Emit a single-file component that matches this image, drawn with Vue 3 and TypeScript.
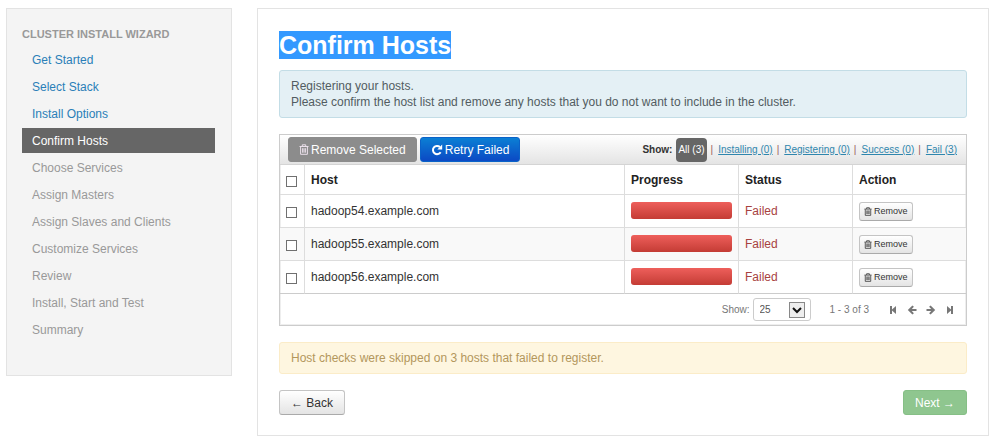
<script setup lang="ts">
import { computed, ref } from 'vue'

interface Step {
  label: string
  state: 'done' | 'active' | 'pending'
}

interface Host {
  name: string
  status: string
  progress: number
  selected: boolean
}

const steps: Step[] = [
  { label: 'Get Started', state: 'done' },
  { label: 'Select Stack', state: 'done' },
  { label: 'Install Options', state: 'done' },
  { label: 'Confirm Hosts', state: 'active' },
  { label: 'Choose Services', state: 'pending' },
  { label: 'Assign Masters', state: 'pending' },
  { label: 'Assign Slaves and Clients', state: 'pending' },
  { label: 'Customize Services', state: 'pending' },
  { label: 'Review', state: 'pending' },
  { label: 'Install, Start and Test', state: 'pending' },
  { label: 'Summary', state: 'pending' },
]

const hosts = ref<Host[]>(
  ['hadoop54', 'hadoop55', 'hadoop56'].map((n) => ({
    name: `${n}.example.com`,
    status: 'Failed',
    progress: 100,
    selected: false,
  })),
)

const filters = computed(() => [
  { label: 'All', count: hosts.value.length },
  { label: 'Installing', count: 0 },
  { label: 'Registering', count: 0 },
  { label: 'Success', count: 0 },
  { label: 'Fail', count: hosts.value.length },
])
const activeFilter = ref('All')
const pageSize = ref(25)

const allSelected = computed({
  get: () => hosts.value.length > 0 && hosts.value.every((h) => h.selected),
  set: (v: boolean) => hosts.value.forEach((h) => (h.selected = v)),
})

function removeHost(name: string) {
  hosts.value = hosts.value.filter((h) => h.name !== name)
}
</script>

<template>
  <div class="page">
    <nav class="sidebar" aria-labelledby="wizard-title">
      <h2 id="wizard-title">CLUSTER INSTALL WIZARD</h2>
      <ul>
        <li v-for="step in steps" :key="step.label">
          <a v-if="step.state !== 'pending'" href="#" :class="['step', step.state]">{{ step.label }}</a>
          <span v-else class="step pending">{{ step.label }}</span>
        </li>
      </ul>
    </nav>

    <main class="card">
      <h1><span class="marked">Confirm Hosts</span></h1>
      <div class="alert info">
        <p>Registering your hosts.</p>
        <p>Please confirm the host list and remove any hosts that you do not want to include in the cluster.</p>
      </div>

      <section class="hosts">
        <div class="toolbar">
          <button type="button" class="btn muted">
            <svg class="trash" viewBox="0 0 10 11"><path d="M0.5 2.5h9M3.3 2.3V0.8h3.4v1.5M1.6 2.8v7.5h6.8V2.8M3.6 4.2v4.5M5 4.2v4.5M6.4 4.2v4.5" /></svg>
            Remove Selected
          </button>
          <button type="button" class="btn primary">
            <svg class="retry" viewBox="0 0 12 12"><path d="M9.6 8.2A4.1 4.1 0 1 1 8.9 3.1" fill="none" stroke="currentColor" stroke-width="2" /><path d="M11.2 0.6v4.9H6.3z" fill="currentColor" /></svg>
            Retry Failed
          </button>
          <div class="filters">
            <b>Show:</b>
            <template v-for="(f, i) in filters" :key="f.label">
              <span v-if="i" class="bar">|</span>
              <a href="#" :class="{ current: f.label === activeFilter }" @click.prevent="activeFilter = f.label">{{ f.label }} ({{ f.count }})</a>
            </template>
          </div>
        </div>

        <table>
          <colgroup>
            <col class="c-check" />
            <col />
            <col class="c-side" />
            <col class="c-side" />
            <col class="c-side" />
          </colgroup>
          <thead>
            <tr>
              <th><input v-model="allSelected" type="checkbox" aria-label="Select all hosts" /></th>
              <th>Host</th>
              <th>Progress</th>
              <th>Status</th>
              <th>Action</th>
            </tr>
          </thead>
          <tbody>
            <tr v-for="host in hosts" :key="host.name">
              <td><input v-model="host.selected" type="checkbox" :aria-label="host.name" /></td>
              <td>{{ host.name }}</td>
              <td>
                <div class="progress"><div class="fill" :style="{ width: host.progress + '%' }"></div></div>
              </td>
              <td class="failed">{{ host.status }}</td>
              <td>
                <button type="button" class="btn mini" @click="removeHost(host.name)">
                  <svg class="trash" viewBox="0 0 10 11"><path d="M0.5 2.5h9M3.3 2.3V0.8h3.4v1.5M1.6 2.8v7.5h6.8V2.8M3.6 4.2v4.5M5 4.2v4.5M6.4 4.2v4.5" /></svg>
                  Remove
                </button>
              </td>
            </tr>
          </tbody>
        </table>

        <div class="pager">
          <label for="page-size">Show:</label>
          <span class="select">
            <select id="page-size" v-model="pageSize">
              <option :value="10">10</option>
              <option :value="25">25</option>
              <option :value="50">50</option>
            </select>
            <svg viewBox="0 0 16 16"><rect x="0.5" y="0.5" width="15" height="15" fill="#eee" stroke="#888" /><path d="M4 6l4 4 4-4" fill="none" stroke="#111" stroke-width="2" /></svg>
          </span>
          <span class="range">1 - {{ hosts.length }} of {{ hosts.length }}</span>
          <div class="moves">
            <button type="button" aria-label="First page">
              <svg viewBox="0 0 10 10"><path d="M2 1h2v3.4L8 1v8L4 5.6V9H2z" /></svg>
            </button>
            <button type="button" aria-label="Previous page">
              <svg viewBox="0 0 10 10"><path d="M5.4 0.4l1.5 1.4L4.8 3.9H9.5v2.2H4.8l2.1 2.1-1.5 1.4L0.8 5z" /></svg>
            </button>
            <button type="button" aria-label="Next page">
              <svg viewBox="0 0 10 10"><path d="M4.6 0.4L3.1 1.8l2.1 2.1H0.5v2.2h4.7L3.1 8.2l1.5 1.4L9.2 5z" /></svg>
            </button>
            <button type="button" aria-label="Last page">
              <svg viewBox="0 0 10 10"><path d="M8 1H6v3.4L2 1v8l4-3.4V9h2z" /></svg>
            </button>
          </div>
        </div>
      </section>

      <div class="alert warning">Host checks were skipped on 3 hosts that failed to register.</div>

      <div class="actions">
        <button type="button" class="btn">← Back</button>
        <button type="button" class="btn success">Next →</button>
      </div>
    </main>
  </div>
</template>

<style>
body {
  margin: 0;
  background: #fff;
}
</style>

<style scoped>
* {
  box-sizing: border-box;
}
.page {
  display: grid;
  grid-template-columns: 226px minmax(0, 1fr);
  gap: 25px;
  align-items: start;
  padding: 8px 10px 4px 6px;
  font: 12px/16px "Liberation Sans", Arial, sans-serif;
  color: #333;
}
h1,
h2,
p,
ul {
  margin: 0;
  padding: 0;
}
button,
select,
input {
  margin: 0;
  font-family: inherit;
}
.sidebar {
  padding: 17px 16px 33px 15px;
  background: #f4f4f4;
  border: 1px solid #e3e3e3;
}
.sidebar h2 {
  font-size: 11px;
  line-height: 16px;
  color: #999;
  margin-bottom: 5px;
}
.sidebar ul {
  display: grid;
  gap: 2px;
  list-style: none;
}
.step {
  display: block;
  padding: 5px 10px 4px;
  text-decoration: none;
  color: #999;
}
.step.done {
  color: #2a7fb8;
}
.step.active {
  background: #666;
  color: #fff;
}
.card {
  padding: 21px 21px 20px;
  border: 1px solid #e3e3e3;
}
h1 {
  font-size: 25px;
  line-height: 30px;
  margin-bottom: 10px;
}
.marked {
  background: #3399ff;
  color: #fff;
}
.alert {
  padding: 7px 11px;
  border: 1px solid;
  border-radius: 3px;
}
.alert.info {
  background: #e4f0f5;
  border-color: #c3dde6;
  color: #525c61;
}
.alert.warning {
  background: #fef6e0;
  border-color: #fbecc8;
  color: #b3975c;
}
.hosts {
  margin: 16px 0;
  border: 1px solid #ccc;
  box-shadow: inset 0 0 0 1px #eee;
}
.toolbar {
  display: flex;
  align-items: center;
  gap: 3px;
  padding: 2px 9px 2px 8px;
  border-bottom: 1px solid #d4d4d4;
  background: linear-gradient(#fff, #e4e4e4);
}
.btn {
  display: inline-flex;
  align-items: center;
  gap: 2px;
  height: 25px;
  padding: 0 11px;
  border: 1px solid #c4c4c4;
  border-bottom-color: #aaa;
  border-radius: 3px;
  background: linear-gradient(#fff, #e4e4e4);
  color: #333;
  font-size: 12px;
  line-height: 16px;
  white-space: nowrap;
}
.btn svg,
.moves svg {
  display: block;
  flex: none;
}
.btn.muted {
  background: #8c8c8c;
  border-color: #8c8c8c;
  color: #fff;
  padding: 0 10px;
}
.btn.muted .trash {
  color: #eadfea;
}
.btn.primary {
  background: linear-gradient(#0b7fd4, #0b49c4);
  border-color: #0a62c8;
  color: #fff;
  padding: 0 10px;
}
.trash {
  width: 10px;
  height: 11px;
  fill: none;
  stroke: currentColor;
}
.retry {
  width: 12px;
  height: 12px;
}
.filters {
  display: flex;
  align-items: center;
  gap: 4px;
  margin-left: auto;
  font-size: 10px;
}
.filters a {
  color: #2f86ad;
}
.filters a.current {
  padding: 4px 2px;
  border-radius: 4px;
  background: #666;
  color: #fff;
  text-decoration: none;
}
.filters .bar {
  margin-right: 1px;
  color: #9a5a5a;
}
table {
  width: 100%;
  table-layout: fixed;
  border-collapse: separate;
  border-spacing: 0;
}
.c-check {
  width: 24px;
}
.c-side {
  width: 114px;
}
th,
td {
  padding: 0 6px;
  border-bottom: 1px solid #ddd;
  border-left: 1px solid #ddd;
  text-align: left;
}
th {
  height: 30px;
  color: #222;
}
td {
  height: 33px;
}
th:first-child,
td:first-child {
  border-left: 0;
}
tbody tr:nth-child(even) {
  background: #f9f9f9;
}
tbody tr:last-child td {
  border-bottom-color: #ccc;
}
input[type='checkbox'] {
  display: block;
  appearance: none;
  width: 11px;
  height: 11px;
  margin-top: 3px;
  border: 1px solid #707070;
  background: #fff;
}
input[type='checkbox']:checked {
  background: #666;
}
td .progress {
  height: 17px;
  margin-bottom: 2px;
  border-radius: 3px;
  background: #eee;
}
.fill {
  height: 100%;
  border-radius: 3px;
  background: linear-gradient(#ee5f5b, #c43c35);
}
.failed {
  color: #a8423f;
}
.btn.mini {
  display: flex;
  height: 19px;
  padding: 0 4px;
  font-size: 9px;
}
.mini .trash {
  width: 8px;
  height: 9px;
}
.pager {
  display: flex;
  align-items: center;
  height: 31px;
  padding-right: 11px;
  justify-content: flex-end;
  color: #777;
  font-size: 10px;
}
.select {
  display: grid;
  align-items: center;
  margin: 0 19px 0 3px;
}
.select select,
.select svg {
  grid-area: 1 / 1;
}
.select select {
  appearance: none;
  width: 58px;
  height: 23px;
  padding: 0 6px;
  border: 1px solid #ccc;
  border-radius: 3px;
  background: #fff;
  color: #555;
  font-size: 10px;
}
.select svg {
  justify-self: end;
  width: 16px;
  height: 16px;
  margin-right: 6px;
  pointer-events: none;
}
.moves {
  display: flex;
  gap: 9px;
  margin-left: 19px;
}
.moves button {
  padding: 0;
  border: 0;
  background: none;
}
.moves svg {
  width: 10px;
  height: 10px;
  fill: #777;
}
.actions {
  display: flex;
  justify-content: space-between;
  margin-top: 16px;
}
.btn.success {
  background: #8fc68f;
  border-color: #86bf86;
  color: #fff;
}
</style>
